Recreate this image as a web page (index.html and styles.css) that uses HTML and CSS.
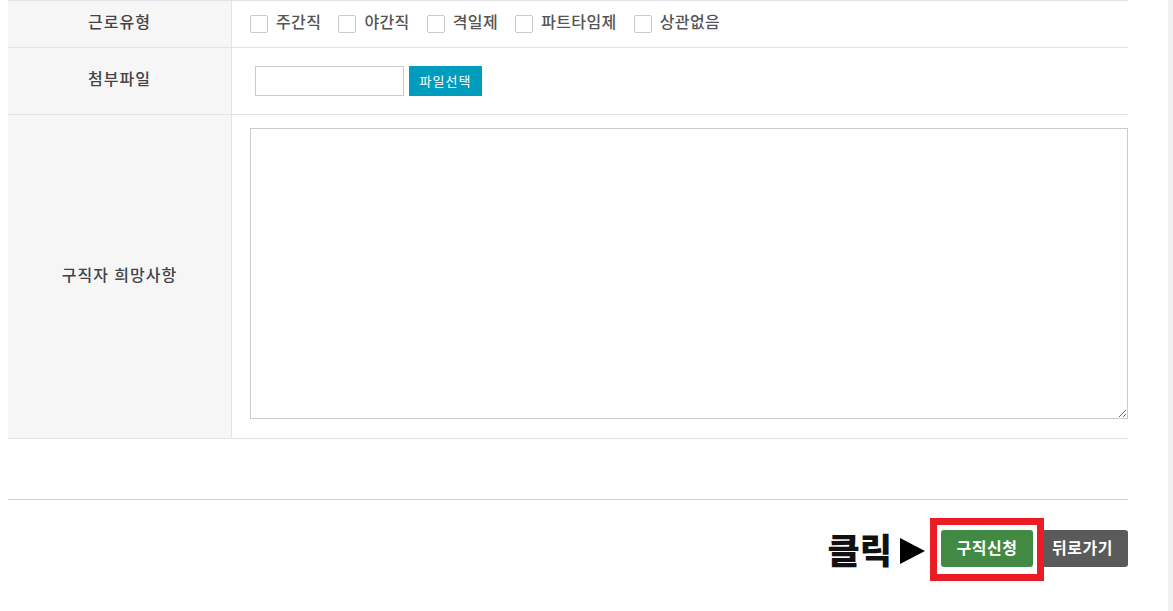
FILE: index.html
```html
<!DOCTYPE html>
<html lang="ko">
<head>
<meta charset="utf-8">
<title>구직신청</title>
<link rel="stylesheet" href="styles.css">
</head>
<body>
<div class="page">
  <main class="main">
    <div class="form">
      <div class="row row-type">
        <div class="label">근로유형</div>
        <div class="field checks">
          <label class="check"><input type="checkbox"><span>주간직</span></label>
          <label class="check"><input type="checkbox"><span>야간직</span></label>
          <label class="check"><input type="checkbox"><span>격일제</span></label>
          <label class="check"><input type="checkbox"><span>파트타임제</span></label>
          <label class="check"><input type="checkbox"><span>상관없음</span></label>
        </div>
      </div>
      <div class="row row-file">
        <div class="label">첨부파일</div>
        <div class="field file">
          <input type="text" class="file-name">
          <button type="button" class="file-btn">파일선택</button>
        </div>
      </div>
      <div class="row row-memo">
        <div class="label">구직자 희망사항</div>
        <div class="field memo">
          <textarea class="memo-area"></textarea>
        </div>
      </div>
    </div>
    <div class="actions">
      <span class="hint">클릭<svg class="arrow" width="25" height="26" viewBox="0 0 25 26"><polygon points="0,0 25,13 0,26" fill="#000"/></svg></span>
      <span class="highlight"><button type="button" class="btn btn-apply">구직신청</button></span>
      <button type="button" class="btn btn-back">뒤로가기</button>
    </div>
  </main>
  <aside class="scroll-strip"></aside>
</div>
</body>
</html>
```

FILE: styles.css
```css
* { box-sizing: border-box; }
html, body { margin: 0; padding: 0; background: #fff; }
body {
  font-family: "Noto Sans CJK KR", "Noto Sans", sans-serif;
  color: #444;
}
.page {
  display: flex;
  height: 611px;
  overflow: hidden;
}
.main {
  width: 1168px;
  padding-left: 8px;
  padding-right: 40px;
}
.scroll-strip {
  width: 5px;
  background: #f1f1f1;
}
.form {
  border-top: 1px solid #e2e2e8;
}
.row {
  display: grid;
  grid-template-columns: 224px 1fr;
  border-bottom: 1px solid #e2e2e8;
}
.row-type { height: 47px; }
.row-file { height: 67px; }
.row-memo { height: 324px; }
.label {
  background: #f6f6f6;
  border-right: 1px solid #e2e2e8;
  display: flex;
  align-items: center;
  justify-content: center;
  font-size: 16px;
  letter-spacing: 1px;
  font-weight: 500;
  color: #444;
  padding-bottom: 6px;
}
.field {
  padding-left: 18px;
  display: flex;
  align-items: center;
}
.checks { gap: 17px; }
.check {
  display: flex;
  align-items: center;
  gap: 8px;
  font-size: 16px;
  letter-spacing: 0.4px;
  color: #555;
  font-weight: 500;
}
.check span { position: relative; top: -3px; }
.check input {
  appearance: none;
  -webkit-appearance: none;
  margin: 0;
  width: 18px;
  height: 18px;
  border: 1px solid #c9c9c9;
  border-radius: 2px;
  background: #fff;
}
.file { gap: 5px; }
.file-name {
  margin: 0 0 0 5px;
  width: 149px;
  height: 30px;
  border: 1px solid #cbcbcb;
  background: #fff;
  padding: 0;
}
.file-btn {
  margin: 0;
  width: 73px;
  height: 30px;
  border: 0;
  background: #009cbe;
  color: #fff;
  font-family: "Noto Sans CJK KR", sans-serif;
  font-size: 13px;
  letter-spacing: 1px;
  padding: 0 0 2px;
}
.memo {
  align-items: flex-start;
  padding: 13px 0 19px 18px;
}
.memo-area {
  display: block;
  margin: 0;
  width: 878px;
  height: 291px;
  border: 1px solid #cbcbcb;
  resize: both;
}
.actions {
  margin-top: 60px;
  border-top: 1px solid #cfcfcf;
  padding-top: 30px;
  display: flex;
  justify-content: flex-end;
  align-items: center;
}
.hint {
  display: flex;
  align-items: center;
  font-size: 35px;
  font-weight: 900;
  color: #111;
  line-height: 37px;
  margin-right: 16px;
}
.arrow { margin-left: 8px; margin-top: 4px; }
.highlight {
  position: relative;
  display: inline-flex;
  margin-right: 4px;
}
.highlight::after {
  content: "";
  position: absolute;
  left: -11px;
  right: -11px;
  top: -12px;
  bottom: -14px;
  border: 7px solid #ec1c24;
  pointer-events: none;
}
.btn {
  margin: 0;
  height: 37px;
  border: 0;
  border-radius: 3px;
  color: #fff;
  font-family: "Noto Sans CJK KR", sans-serif;
  font-size: 16px;
  letter-spacing: 0.5px;
  font-weight: 700;
  padding: 0 0 3px;
}
.btn-apply { width: 92px; background: #428a43; }
.btn-back { width: 91px; background: #5a5a5a; }
```
